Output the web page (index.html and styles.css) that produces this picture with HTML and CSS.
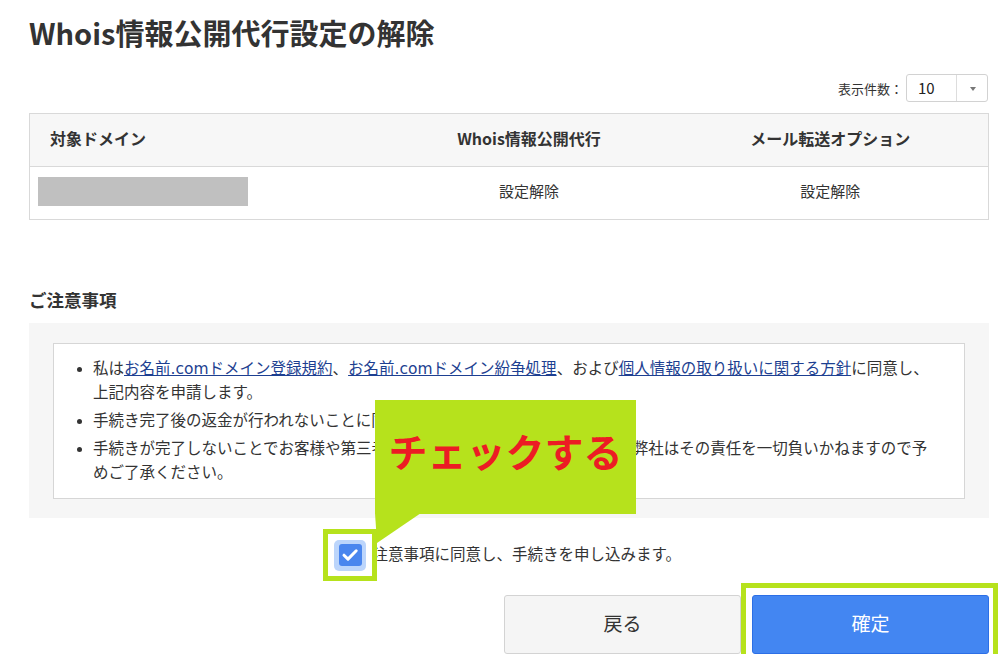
FILE: index.html
```html
<!DOCTYPE html>
<html lang="ja">
<head>
    <meta charset="UTF-8">
    <meta name="viewport" content="width=device-width, initial-scale=1.0">
    <title>Whois情報公開代行設定の解除</title>
    <link rel="stylesheet" href="styles.css">
</head>
<body>

    <div class="page">
        <h1>Whois情報公開代行設定の解除</h1>

        <div class="toolbar">
            <span class="toolbar-label">表示件数：</span>
            <div class="select">
                <span class="select-value">10</span>
                <span class="select-arrow"></span>
            </div>
        </div>

        <table class="domain-table">
            <thead>
                <tr>
                    <th class="col-domain">対象ドメイン</th>
                    <th class="col-whois">Whois情報公開代行</th>
                    <th>メール転送オプション</th>
                </tr>
            </thead>
            <tbody>
                <tr>
                    <td class="col-domain"><div class="masked"></div></td>
                    <td>設定解除</td>
                    <td>設定解除</td>
                </tr>
            </tbody>
        </table>

        <h2>ご注意事項</h2>

        <div class="notice">
            <ul class="notice-box">
                <li>私は<a href="#">お名前.comドメイン登録規約</a>、<a href="#">お名前.comドメイン紛争処理</a>、および<a href="#">個人情報の取り扱いに関する方針</a>に同意し、<br>上記内容を申請します。</li>
                <li>手続き完了後の返金が行われないことに同意します。</li>
                <li>手続きが完了しないことでお客様や第三者に損害が発生した場合であっても、弊社はその責任を一切負いかねますので予めご了承ください。</li>
            </ul>
        </div>

        <div class="agree">
            <span class="check">
                <span class="check-frame">
                    <span class="check-halo">
                        <span class="check-box">
                            <svg width="23" height="22" viewBox="0 0 23 22"><path d="M5 11.2l4 3.9 8.2-8.3" fill="none" stroke="#fff" stroke-width="3" stroke-linecap="round" stroke-linejoin="round"/></svg>
                        </span>
                    </span>
                </span>
            </span>
            <span class="agree-text">ご注意事項に同意し、手続きを申し込みます。</span>
            <div class="callout">チェックする</div>
        </div>

        <div class="actions">
            <button class="btn btn-back">戻る</button>
            <div class="btn-mark">
                <button class="btn btn-submit">確定</button>
            </div>
        </div>
    </div>

</body>
</html>
```

FILE: styles.css
```css
* {
    box-sizing: border-box;
}

body {
    margin: 0;
    padding: 0;
    font-family: "Noto Sans CJK JP", "Noto Sans", sans-serif;
    color: #333;
    background: #fff;
}

.page {
    padding: 0 16px 0 29px;
}

h1 {
    margin: 13px 0 0;
    font-size: 29px;
    line-height: 38px;
    font-weight: 700;
    color: #333;
}

/* 表示件数 */
.toolbar {
    display: flex;
    justify-content: flex-end;
    align-items: center;
    margin-top: 23px;
    padding-right: 1px;
}

.toolbar-label {
    font-size: 13px;
    margin-right: 3px;
}

.select {
    display: flex;
    width: 82px;
    height: 28px;
    border: 1px solid #d2d2d2;
    border-radius: 3px;
    background: #fff;
}

.select-value {
    flex: 1;
    padding-left: 11px;
    font-size: 15px;
    line-height: 26px;
    color: #222;
}

.select-arrow {
    width: 31px;
    border-left: 1px solid #ddd;
    position: relative;
}

.select-arrow::after {
    content: "";
    position: absolute;
    left: 13px;
    top: 12px;
    border-left: 3px solid transparent;
    border-right: 3px solid transparent;
    border-top: 4px solid #777;
}

/* 対象ドメイン一覧 */
.domain-table {
    width: 100%;
    margin-top: 11px;
    border-collapse: collapse;
    table-layout: fixed;
    border: 1px solid #d9d9d9;
}

.domain-table th {
    height: 53px;
    background: #f7f7f7;
    font-size: 16px;
    font-weight: 700;
    text-align: center;
    border-bottom: 1px solid #d9d9d9;
    padding: 0 0 5px;
}

.domain-table td {
    height: 53px;
    font-size: 15px;
    text-align: center;
    padding: 0 0 5px;
}

.domain-table .col-domain {
    width: 356px;
    text-align: left;
}

.domain-table th.col-domain {
    padding-left: 20px;
}

.domain-table td.col-domain {
    padding: 0 0 0 8px;
}

.domain-table .col-whois {
    width: 287px;
}

.masked {
    width: 210px;
    height: 29px;
    margin-top: -3px;
    background: #c0c0c0;
}

/* ご注意事項 */
h2 {
    margin: 68px 0 0;
    font-size: 17.5px;
    line-height: 24px;
    font-weight: 700;
}

.notice {
    margin-top: 11px;
    padding: 20px 24px 19px;
    background: #f6f6f6;
}

.notice-box {
    margin: 0;
    padding: 13px 25px 13px 39px;
    background: #fff;
    border: 1px solid #d6d6d6;
    font-family: "DejaVu Sans", "Noto Sans CJK JP", sans-serif;
    font-size: 15.5px;
    line-height: 24px;
    color: #333;
}

.notice-box li + li {
    margin-top: 4px;
}

.notice-box a {
    color: #1d3f91;
    text-decoration: underline;
}

/* 同意チェック */
.agree {
    position: relative;
    display: flex;
    justify-content: center;
    align-items: center;
    height: 70px;
    font-size: 15.5px;
}

.check {
    position: relative;
    width: 20px;
    height: 20px;
}

.check-frame {
    position: absolute;
    left: -14px;
    top: -14px;
    width: 54px;
    height: 52px;
    border: 5px solid #b6e21c;
    background: #fff;
    display: flex;
    justify-content: center;
    align-items: center;
}

.check-halo {
    display: flex;
    justify-content: center;
    align-items: center;
    width: 32px;
    height: 31px;
    border-radius: 5px;
    background: #bcd5fb;
}

.check-box {
    display: flex;
    width: 23px;
    height: 22px;
    border-radius: 3px;
    background: #4a86ee;
}

.agree-text {
    line-height: 24px;
}

.callout {
    position: absolute;
    left: 346px;
    top: -118px;
    width: 261px;
    height: 114px;
    padding-bottom: 14px;
    background: #b6e21c;
    color: #ec1c24;
    font-size: 39px;
    font-weight: 700;
    display: flex;
    justify-content: center;
    align-items: center;
    z-index: 2;
}

.callout::after {
    content: "";
    position: absolute;
    left: 0;
    top: 113px;
    width: 46px;
    height: 30px;
    background: #b6e21c;
    clip-path: polygon(0 0, 100% 0, 2px 100%);
}

/* ボタン */
.actions {
    display: flex;
    justify-content: flex-end;
    gap: 11px;
    margin-top: 7px;
}

.btn {
    width: 237px;
    height: 59px;
    padding: 0 0 5px;
    font-family: "Noto Sans CJK JP", sans-serif;
    font-size: 19px;
    border-radius: 3px;
    cursor: pointer;
}

.btn-back {
    background: #f5f5f5;
    border: 1px solid #d3d3d3;
    color: #333;
}

.btn-submit {
    position: relative;
    background: #4386f2;
    border: 1px solid #2c6fe6;
    color: #fff;
}

.btn-mark {
    position: relative;
}

.btn-mark::before {
    content: "";
    position: absolute;
    left: -11px;
    right: -9px;
    top: -12px;
    bottom: -9px;
    border: 5px solid #b6e21c;
}
```
